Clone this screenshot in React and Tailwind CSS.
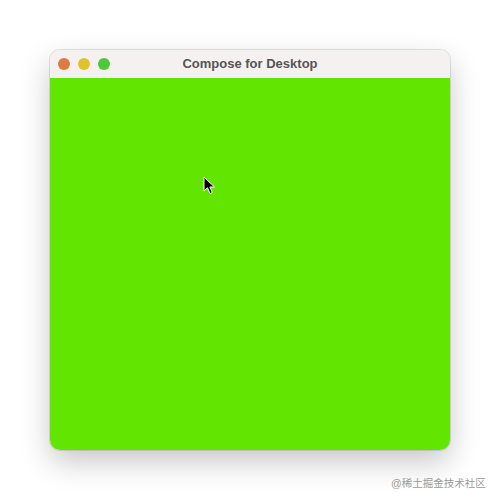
export default function App() {
  return (
    <div className="w-[500px] h-[500px] bg-white relative" style={{ fontFamily: '"Liberation Sans", Arial, sans-serif' }}>
      <div className="absolute left-[50px] top-[50px] w-[400px] h-[400px] rounded-[10px] overflow-hidden flex flex-col shadow-[0_12px_30px_rgba(0,0,0,0.22)] ring-1 ring-black/10">
        <div className="h-[28px] bg-[#f6f1f1] flex items-center relative shrink-0">
          <div className="flex gap-[8px] pl-[8px]">
            <span className="w-[12px] h-[12px] rounded-full bg-[#db7d42]" />
            <span className="w-[12px] h-[12px] rounded-full bg-[#e2c12e]" />
            <span className="w-[12px] h-[12px] rounded-full bg-[#4cc83a]" />
          </div>
          <div className="absolute inset-0 flex items-center justify-center text-[13px] font-bold text-[#555]">
            Compose for Desktop
          </div>
        </div>
        <div className="flex-1 bg-[#62e500] relative">
          <svg className="absolute left-[153px] top-[98px]" width="14" height="20" viewBox="0 0 14 20">
            <path d="M1 1 L1 15 L4.5 11.8 L7 17.5 L9.3 16.5 L6.9 11 L11.5 11 Z" fill="#000" stroke="#fff" strokeWidth="1" strokeLinejoin="round" />
          </svg>
        </div>
      </div>
      <div
        className="absolute left-[391px] top-[476px] text-[10.5px] text-[#9a9a9a] whitespace-nowrap"
        style={{ fontFamily: '"Liberation Sans", "Noto Sans CJK SC", sans-serif' }}
      >
        @稀土掘金技术社区
      </div>
    </div>
  );
}
